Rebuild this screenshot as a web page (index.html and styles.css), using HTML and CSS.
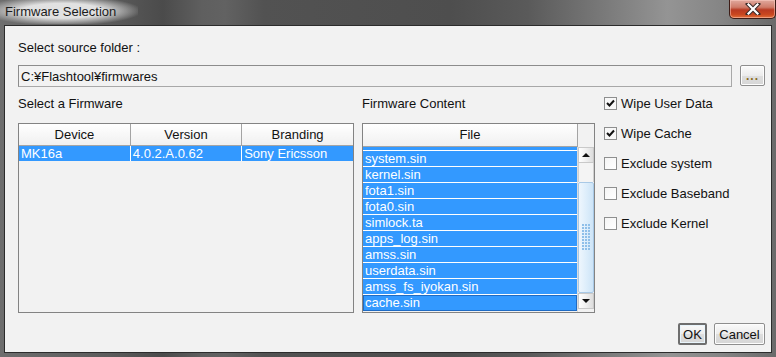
FILE: index.html
```html
<!DOCTYPE html>
<html lang="ja">
<head>
  <meta charset="UTF-8">
  <meta name="viewport" content="width=device-width, initial-scale=1.0">
  <title>Firmware Selection</title>
  <link rel="stylesheet" href="styles.css">
</head>
<body>
  <!-- Janela de diálogo -->
  <div class="window">
    <div class="titlebar">
      <span class="title">Firmware Selection</span>
      <button class="close" aria-label="Close">
        <svg width="16" height="12" viewBox="0 0 16 12">
          <path d="M3 1 L13 11 M13 1 L3 11" stroke="#3a2a28" stroke-width="4.2" stroke-linecap="square"/>
          <path d="M3.5 1.5 L12.5 10.5 M12.5 1.5 L3.5 10.5" stroke="#ffffff" stroke-width="2.2" stroke-linecap="square"/>
        </svg>
      </button>
    </div>

    <div class="client">
      <div class="caption">Select source folder :</div>

      <!-- Pasta de origem -->
      <div class="path-row">
        <input class="path" type="text" value="C:¥Flashtool¥firmwares" readonly>
        <button class="btn browse">...</button>
      </div>

      <div class="main">
        <!-- Lista de firmwares -->
        <section class="firmwares">
          <div class="caption">Select a Firmware</div>
          <div class="grid-box">
            <table class="grid">
              <thead>
                <tr><th>Device</th><th>Version</th><th>Branding</th></tr>
              </thead>
              <tbody>
                <tr class="selected"><td>MK16a</td><td>4.0.2.A.0.62</td><td>Sony Ericsson</td></tr>
              </tbody>
            </table>
          </div>
        </section>

        <!-- Conteúdo do firmware (lista rolada alguns pixels) -->
        <section class="content">
          <div class="caption">Firmware Content</div>
          <div class="file-box">
            <div class="file-head">
              <div class="file-col">File</div>
              <div class="corner"></div>
            </div>
            <div class="file-body">
              <ul class="files">
                <li class="partial"></li>
                <li>system.sin</li>
                <li>kernel.sin</li>
                <li>fota1.sin</li>
                <li>fota0.sin</li>
                <li>simlock.ta</li>
                <li>apps_log.sin</li>
                <li>amss.sin</li>
                <li>userdata.sin</li>
                <li>amss_fs_iyokan.sin</li>
                <li class="focused">cache.sin</li>
              </ul>
              <div class="scrollbar">
                <div class="arrow up"></div>
                <div class="track"></div>
                <div class="thumb"><span class="grip"></span></div>
                <div class="arrow down"></div>
              </div>
            </div>
          </div>
        </section>

        <!-- Opções -->
        <ul class="options">
          <li><span class="check checked"></span>Wipe User Data</li>
          <li><span class="check checked"></span>Wipe Cache</li>
          <li><span class="check"></span>Exclude system</li>
          <li><span class="check"></span>Exclude Baseband</li>
          <li><span class="check"></span>Exclude Kernel</li>
        </ul>
      </div>

      <div class="actions">
        <button class="btn ok">OK</button>
        <button class="btn cancel">Cancel</button>
      </div>
    </div>
  </div>
</body>
</html>
```

FILE: styles.css
```css
/* Base */
body {
  margin: 0;
  font-family: "Liberation Sans", Arial, sans-serif;
  font-size: 13px;
  color: #111;
}

/* Moldura da janela (vidro escuro) */
.window {
  width: 776px;
  height: 357px;
  box-sizing: border-box;
  padding: 0 4px 4px 4px;
  display: flex;
  flex-direction: column;
  background: linear-gradient(90deg, #6e6e6e 0%, #5c5c5c 14%, #4b4b4b 21%, #5f5f5f 26%, #626262 29%, #525252 34%, #4e4e4e 58%, #5a5a5a 68%, #7a7a7a 78%, #949494 86%, #858585 93%, #6a6a6a 100%);
}

/* Barra de título */
.titlebar {
  height: 25px;
  display: flex;
  align-items: flex-start;
  justify-content: space-between;
}

.title {
  margin-left: -4px;
  padding: 4px 22px 0 5px;
  height: 24px;
  box-sizing: border-box;
  color: #1c1c1c;
  background: radial-gradient(ellipse 58% 62% at 45% 45%, rgba(232, 232, 232, 0.95) 50%, rgba(232, 232, 232, 0) 100%);
}

.close {
  width: 47px;
  height: 19px;
  margin-right: -4px;
  padding: 0;
  display: flex;
  align-items: center;
  justify-content: center;
  border: 1px solid #3d1c16;
  border-top: none;
  border-radius: 0 0 5px 5px;
  background: linear-gradient(180deg, #e0a99e 0%, #cf7c6a 40%, #b83a22 55%, #c9461f 80%, #e0703a 100%);
  box-shadow: inset 0 0 0 1px rgba(255, 210, 200, 0.5);
}

/* Área cliente */
.client {
  flex: 1;
  border: 1px solid #2c2c2c;
  background: #f2f2f2;
  padding: 13px 6px 0 13px;
  display: flex;
  flex-direction: column;
}

.caption {
  line-height: 17px;
  height: 16px;
}

/* Pasta de origem */
.path-row {
  display: flex;
  gap: 8px;
  margin-top: 10px;
  height: 22px;
}

.path {
  flex: 1;
  margin: 0;
  padding: 0 2px;
  border: 1px solid #a8a8a8;
  border-top-color: #8c8c8c;
  border-left-color: #8c8c8c;
  background: #f2f2f2;
  font: inherit;
  color: #111;
}

/* Botões */
.btn {
  margin: 0;
  padding: 0;
  font: inherit;
  color: #111;
  border: 1px solid #8e8e8e;
  border-radius: 2px;
  background: linear-gradient(180deg, #fafafa 0%, #ececec 50%, #dedede 51%, #d6d6d6 100%);
  box-shadow: inset 0 0 0 1px #fdfdfd;
}

.browse {
  width: 25px;
  height: 21px;
  font-weight: bold;
  font-size: 12px;
  color: #8a6a1a;
  line-height: 12px;
  letter-spacing: 1px;
}

/* Área principal */
.main {
  display: flex;
  margin-top: 8px;
  height: 218px;
}

.firmwares {
  width: 336px;
}

.content {
  width: 233px;
  margin-left: 8px;
}

.grid-box,
.file-box {
  margin-top: 12px;
  height: 190px;
  box-sizing: border-box;
  border: 1px solid #838383;
}

/* Tabela de firmwares */
.grid {
  width: 100%;
  border-collapse: collapse;
  table-layout: fixed;
}

.grid th {
  height: 21px;
  padding: 0;
  font-weight: normal;
  border-right: 1px solid #a4a4a4;
  border-bottom: 1px solid #a4a4a4;
  background: linear-gradient(180deg, #ffffff 0%, #f6f6f6 60%, #f0f0f0 100%);
}

.grid th:last-child {
  border-right: none;
}

.grid td {
  height: 15px;
  padding: 0 0 0 2px;
  line-height: 15px;
  white-space: nowrap;
  overflow: hidden;
}

.grid .selected td {
  background: #3399ff;
  color: #fff;
  border-right: 1px solid #fff;
}

.grid .selected td:last-child {
  border-right: none;
}

/* Conteúdo do firmware */
.file-box {
  display: flex;
  flex-direction: column;
}

.file-head {
  display: flex;
  height: 23px;
}

.file-col {
  flex: 1;
  line-height: 22px;
  text-align: center;
  border-right: 1px solid #a4a4a4;
  border-bottom: 1px solid #a4a4a4;
  background: linear-gradient(180deg, #ffffff 0%, #f6f6f6 60%, #f0f0f0 100%);
}

.corner {
  width: 16px;
}

.file-body {
  flex: 1;
  display: flex;
  overflow: hidden;
}

.files {
  flex: 1;
  margin: 0;
  padding: 0;
  list-style: none;
}

.files li {
  height: 15px;
  line-height: 15px;
  padding-left: 2px;
  color: #fff;
  background: #3399ff;
  border-bottom: 1px solid #fff;
}

.files li.partial {
  height: 3px;
}

.files li.focused {
  box-sizing: border-box;
  height: 16px;
  line-height: 14px;
  padding-left: 1px;
  border: 1px solid #1f6bc4;
}

/* Barra de rolagem */
.scrollbar {
  width: 16px;
  display: flex;
  flex-direction: column;
  border-left: 1px solid #dcdcdc;
}

.arrow {
  height: 16px;
  box-sizing: border-box;
  border: 1px solid #c9c9c9;
  background: linear-gradient(90deg, #ffffff 0%, #f0f0f0 50%, #dddddd 100%);
  position: relative;
}

.arrow::after {
  content: "";
  position: absolute;
  left: 3px;
  top: 5px;
  border-left: 4px solid transparent;
  border-right: 4px solid transparent;
}

.arrow.up::after {
  border-bottom: 4px solid #111;
}

.arrow.down::after {
  border-top: 4px solid #111;
}

.track {
  height: 19px;
  background: #f4f4f4;
  border-left: 1px solid #d0d0d0;
  border-right: 1px solid #d0d0d0;
}

.thumb {
  height: 111px;
  box-sizing: border-box;
  border: 1px solid #a9c9e6;
  border-radius: 2px;
  background: linear-gradient(90deg, #eef6fd 0%, #deeefb 50%, #cde4f7 100%);
  display: flex;
  align-items: center;
  justify-content: center;
}

.grip {
  width: 9px;
  height: 27px;
  background-image: radial-gradient(circle at 1px 1px, #8fbfe9 0.9px, transparent 1px);
  background-size: 3px 3px;
}

/* Opções */
.options {
  list-style: none;
  margin: 0 0 0 9px;
  padding: 0;
  display: flex;
  flex-direction: column;
  gap: 14px;
}

.options li {
  display: flex;
  align-items: center;
  gap: 4px;
  height: 16px;
}

.check {
  width: 13px;
  height: 13px;
  flex: none;
  box-sizing: border-box;
  border: 1px solid #8e8f8f;
  background: linear-gradient(135deg, #f4f4f4 0%, #ffffff 100%);
}

.check.checked {
  background:
    url("data:image/svg+xml,%3Csvg xmlns='http://www.w3.org/2000/svg' width='11' height='11'%3E%3Cpath d='M2 5 L4.5 7.5 L9 2.5' fill='none' stroke='%23111' stroke-width='2'/%3E%3C/svg%3E") center / 11px 11px no-repeat,
    #f8f8f8;
}

/* Botões de ação */
.actions {
  display: flex;
  justify-content: flex-end;
  gap: 7px;
  margin-top: 10px;
}

.actions .btn {
  height: 22px;
}

.ok {
  width: 29px;
  border: 2px solid #6e6e6e;
  box-shadow: inset 0 0 0 1px #e8f4fb;
}

.cancel {
  width: 51px;
}
```
